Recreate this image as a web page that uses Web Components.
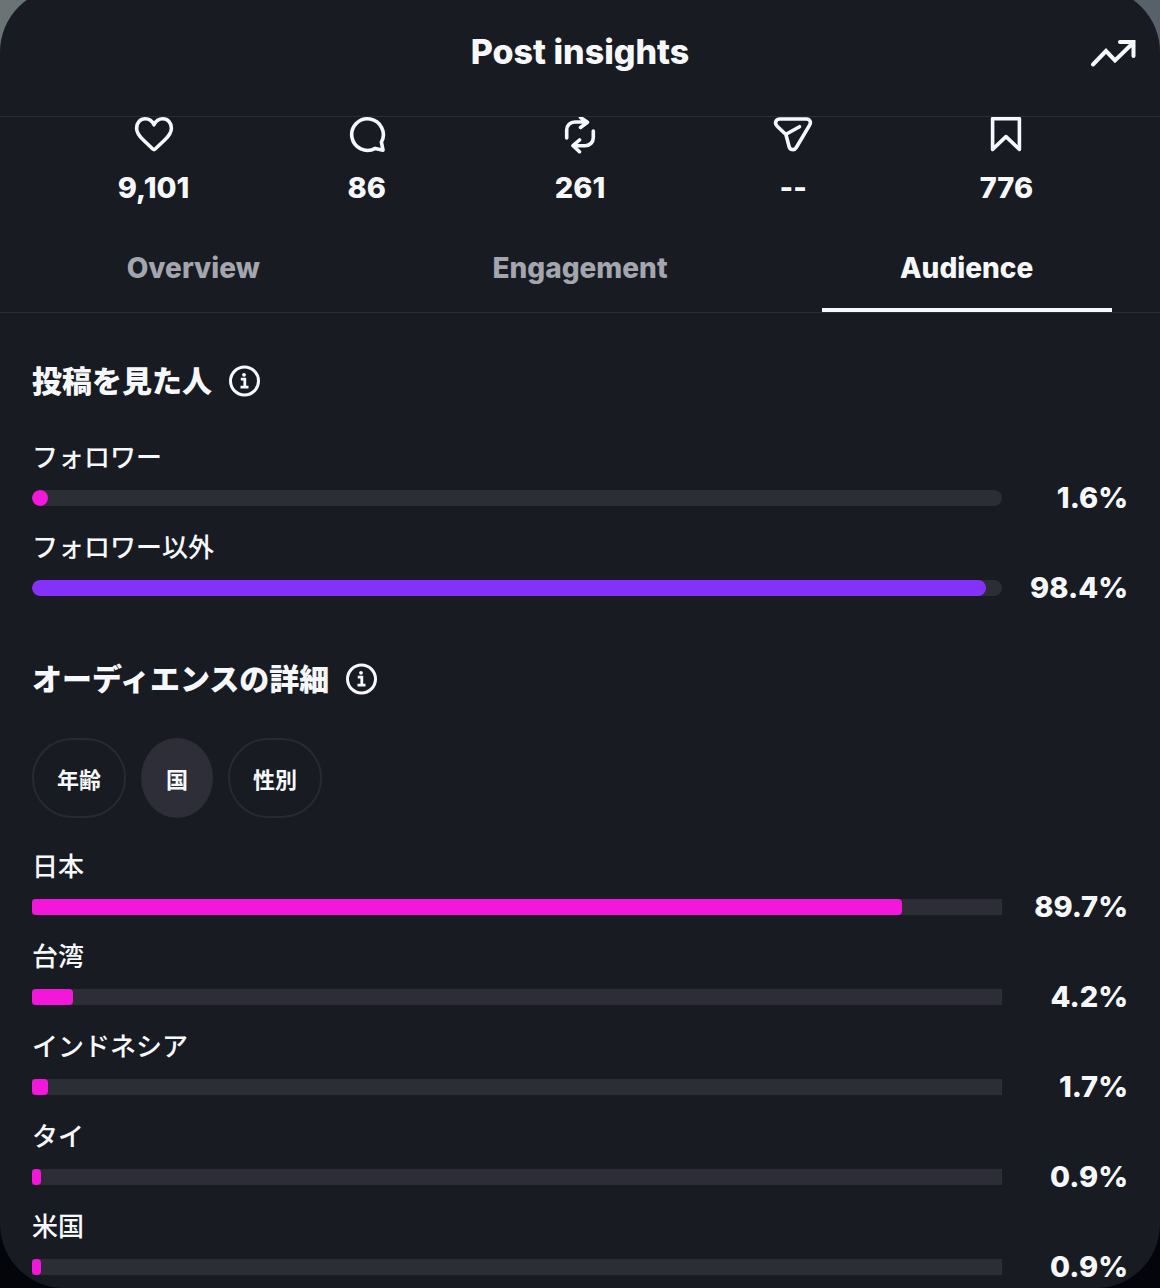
<!DOCTYPE html>
<html lang="ja">
<head>
<meta charset="utf-8">
<meta name="viewport" content="width=device-width, initial-scale=1">
<title>Post insights</title>
<style>
  body {
    margin: 0;
    min-height: 100vh;
    overflow-x: hidden;
    background: linear-gradient(to right, #6b7474, #56616a) top / 100% 50% no-repeat #04050b;
    color: #f8f9ff;
    font-family: Inter, "Noto Sans CJK JP", sans-serif;
  }
</style>
</head>
<body>

<insight-sheet heading="Post insights">
  <stat-row>
    <stat-item icon="heart">9,101</stat-item>
    <stat-item icon="comment">86</stat-item>
    <stat-item icon="repost">261</stat-item>
    <stat-item icon="share">--</stat-item>
    <stat-item icon="bookmark">776</stat-item>
  </stat-row>

  <insight-tabs role="tablist">
    <insight-tab>Overview</insight-tab>
    <insight-tab>Engagement</insight-tab>
    <insight-tab selected>Audience</insight-tab>
  </insight-tabs>

  <insight-section heading="投稿を見た人">
    <ratio-list>
      <ratio-bar label="フォロワー" value="1.6" rounded></ratio-bar>
      <ratio-bar label="フォロワー以外" value="98.4" color="#8431fb" rounded></ratio-bar>
    </ratio-list>
  </insight-section>

  <insight-section heading="オーディエンスの詳細">
    <filter-chips>
      <filter-chip>年齢</filter-chip>
      <filter-chip selected>国</filter-chip>
      <filter-chip>性別</filter-chip>
    </filter-chips>
    <ratio-list>
      <ratio-bar label="日本" value="89.7"></ratio-bar>
      <ratio-bar label="台湾" value="4.2"></ratio-bar>
      <ratio-bar label="インドネシア" value="1.7"></ratio-bar>
      <ratio-bar label="タイ" value="0.9"></ratio-bar>
      <ratio-bar label="米国" value="0.9"></ratio-bar>
    </ratio-list>
  </insight-section>
</insight-sheet>

<script>
const ICONS = {
  heart: '<path d="M20 7.8C18.2 4 15 1.8 11.2 1.8 6.2 1.8 2.6 5.8 2.6 11.2c0 5 3 8.300 7 12.100l9.200 8.700q1.200 1.100 2.400 0l9.200-8.700c4-3.800 7-7.100 7-12.100 0-5.400-3.600-9.400-8.600-9.400C25 1.800 21.800 4 20 7.800Z"/>',
  comment: '<path d="M34.400 25.200A15.800 15.800 0 1 0 28.300 31.400L36 33.200Z"/>',
  repost: '<path d="M6.700 21v-8a8 8 0 0 1 8-8H27M20.500 .5 27.500 5.200l-7 5.300M33.300 14v6.700a8 8 0 0 1-8 8H13M19.500 23l-6.500 5.700 6.500 6"/>',
  share: '<path d="M7 2h26.300c3.800 0 5 3.200 3.300 6.200L23.300 30.500c-2 3.300-6.400 2.500-7.200-1l-3.200-12L4.200 9.200C1.200 6.300 2.600 2 7 2ZM13 17.300l13.500-7.600"/>',
  bookmark: '<path d="M6.600 1.700h26.800V32.400L20 19.600 6.600 32.400Z"/>'
};

// sheet with a title bar; the page behind it shows at the corners
class InsightSheet extends HTMLElement {
  constructor() {
    super();
    this.attachShadow({mode: 'open'});
    this.shadowRoot.innerHTML = `
      <style>
        :host {
          display: block;
          box-sizing: border-box;
          margin-top: -12px;
          padding: 12px 0 7px;
          border-radius: 64px;
          background: #191b22;
        }
        header {
          display: grid;
          grid-template-columns: 1fr auto 1fr;
          align-items: center;
          height: 104px;
          padding: 0 24px 12px;
          border-bottom: 1px solid #2b2d34;
        }
        h1 {
          grid-column: 2;
          margin: 0;
          font-size: 34px;
          line-height: 40px;
          font-weight: 800;
        }
        button {
          justify-self: end;
          display: flex;
          padding: 0;
          border: 0;
          background: none;
          color: inherit;
          cursor: pointer;
        }
        svg {
          width: 46px;
          height: 32px;
          fill: none;
          stroke: currentColor;
          stroke-width: 4;
          stroke-linecap: round;
        }
      </style>
      <header>
        <h1></h1>
        <button aria-label="Trends">
          <svg viewBox="0 0 46 32"><path d="M3 28.500 16 15l9 9.500L43 7M30 6h13.500v14"/></svg>
        </button>
      </header>
      <main><slot></slot></main>
    `;
    this.heading = this.shadowRoot.querySelector('h1');
  }

  connectedCallback() {
    this.heading.textContent = this.getAttribute('heading');
  }
}

class StatRow extends HTMLElement {
  constructor() {
    super();
    this.attachShadow({mode: 'open'});
    this.shadowRoot.innerHTML = `
      <style>
        :host {
          display: flex;
          padding: 0 47px 20px;
        }
        ::slotted(*) {
          flex: 1;
        }
      </style>
      <slot></slot>
    `;
  }
}

class StatItem extends HTMLElement {
  constructor() {
    super();
    this.attachShadow({mode: 'open'});
    this.shadowRoot.innerHTML = `
      <style>
        :host {
          display: flex;
          flex-direction: column;
          align-items: center;
          gap: 16px;
          font-size: 29px;
          line-height: 32px;
          font-weight: 800;
        }
        svg {
          width: 40px;
          height: 39px;
          fill: none;
          stroke: currentColor;
          stroke-width: 3.6;
          stroke-linecap: round;
          stroke-linejoin: round;
        }
      </style>
      <svg viewBox="0 0 40 39" aria-hidden="true"></svg>
      <span><slot></slot></span>
    `;
    this.icon = this.shadowRoot.querySelector('svg');
  }

  connectedCallback() {
    this.icon.innerHTML = ICONS[this.getAttribute('icon')];
  }
}

class InsightTabs extends HTMLElement {
  constructor() {
    super();
    this.attachShadow({mode: 'open'});
    this.shadowRoot.innerHTML = `
      <style>
        :host {
          display: flex;
          border-bottom: 1px solid #2b2d34;
        }
        ::slotted(*) {
          flex: 1;
        }
      </style>
      <slot></slot>
    `;
    this.addEventListener('click', (event) => this.select(event.target.closest('insight-tab')));
  }

  select(tab) {
    if (!tab) return;
    for (const item of this.children) {
      item.toggleAttribute('selected', item === tab);
    }
  }
}

class InsightTab extends HTMLElement {
  static observedAttributes = ['selected'];

  constructor() {
    super();
    this.attachShadow({mode: 'open'});
    this.shadowRoot.innerHTML = `
      <style>
        :host {
          display: block;
        }
        button {
          width: 100%;
          height: 88px;
          padding: 0;
          border: 0;
          background: none;
          color: #a3a5af;
          font: inherit;
          font-size: 28px;
          font-weight: 800;
          cursor: pointer;
        }
        :host([selected]) button {
          color: #f8f9ff;
          background: linear-gradient(#f8f9ff, #f8f9ff) center bottom / 75% 4px no-repeat;
        }
      </style>
      <button role="tab" aria-selected="false"><slot></slot></button>
    `;
    this.button = this.shadowRoot.querySelector('button');
  }

  attributeChangedCallback() {
    this.button.setAttribute('aria-selected', this.hasAttribute('selected'));
  }
}

class InsightSection extends HTMLElement {
  constructor() {
    super();
    this.attachShadow({mode: 'open'});
    this.shadowRoot.innerHTML = `
      <style>
        :host {
          display: block;
          padding: 48px 32px 0;
        }
        :host(:last-child) {
          padding-top: 57px;
        }
        .title {
          display: flex;
          align-items: center;
          gap: 16px;
          margin-bottom: 39px;
        }
        h2 {
          margin: 0;
          font-size: 30px;
          line-height: 40px;
          font-weight: 900;
        }
        button {
          display: flex;
          padding: 0;
          border: 0;
          background: none;
          color: inherit;
          cursor: pointer;
        }
        svg {
          width: 34px;
          height: 34px;
          fill: none;
          stroke: currentColor;
          stroke-width: 3;
        }
      </style>
      <div class="title">
        <h2></h2>
        <button aria-label="Info">
          <svg viewBox="0 0 34 34">
            <circle cx="16.500" cy="17" r="14"/>
            <circle cx="16" cy="10.800" r="1.900" fill="currentColor" stroke="none"/>
            <path d="M12.800 15.200h4v8M12.500 23.200h8" stroke-width="2.800"/>
          </svg>
        </button>
      </div>
      <slot></slot>
    `;
    this.heading = this.shadowRoot.querySelector('h2');
  }

  connectedCallback() {
    this.heading.textContent = this.getAttribute('heading');
  }
}

class FilterChips extends HTMLElement {
  constructor() {
    super();
    this.attachShadow({mode: 'open'});
    this.shadowRoot.innerHTML = `
      <style>
        :host {
          display: flex;
          gap: 15px;
          margin-bottom: 31px;
        }
      </style>
      <slot></slot>
    `;
    this.addEventListener('click', (event) => this.select(event.target.closest('filter-chip')));
  }

  select(chip) {
    if (!chip) return;
    for (const item of this.children) {
      item.toggleAttribute('selected', item === chip);
    }
  }
}

class FilterChip extends HTMLElement {
  constructor() {
    super();
    this.attachShadow({mode: 'open'});
    this.shadowRoot.innerHTML = `
      <style>
        :host {
          display: block;
        }
        button {
          height: 80px;
          padding: 0 23px;
          border: 2px solid #282a31;
          border-radius: min(40px, 50%) / 40px;
          background: none;
          color: inherit;
          font: inherit;
          font-size: 22px;
          font-weight: 700;
          cursor: pointer;
        }
        :host([selected]) button {
          border-color: #2d2e38;
          background: #2d2e38;
        }
      </style>
      <button><slot></slot></button>
    `;
  }
}

class RatioList extends HTMLElement {
  constructor() {
    super();
    this.attachShadow({mode: 'open'});
    this.shadowRoot.innerHTML = `
      <style>
        :host {
          display: flex;
          flex-direction: column;
          gap: 18px;
        }
      </style>
      <slot></slot>
    `;
  }
}

// label above a track, percentage to the right of it
class RatioBar extends HTMLElement {
  constructor() {
    super();
    this.attachShadow({mode: 'open'});
    this.shadowRoot.innerHTML = `
      <style>
        :host {
          display: block;
        }
        .label {
          margin-bottom: 8px;
          font-size: 26px;
          line-height: 36px;
          font-weight: 500;
        }
        .row {
          display: grid;
          grid-template-columns: 1fr 126px;
          align-items: center;
        }
        .track {
          height: 16px;
          background: #2c2d36;
          overflow: hidden;
        }
        .fill {
          height: 100%;
          border-radius: 4px;
          background: #f317d9;
        }
        :host([rounded]) .track, :host([rounded]) .fill {
          border-radius: 8px;
        }
        .value {
          font-size: 29px;
          line-height: 28px;
          font-weight: 800;
          text-align: right;
        }
      </style>
      <div class="label" id="label"></div>
      <div class="row">
        <div class="track" role="meter" aria-labelledby="label" aria-valuemin="0" aria-valuemax="100">
          <div class="fill"></div>
        </div>
        <div class="value"></div>
      </div>
    `;
    this.label = this.shadowRoot.querySelector('.label');
    this.track = this.shadowRoot.querySelector('.track');
    this.fill = this.shadowRoot.querySelector('.fill');
    this.percent = this.shadowRoot.querySelector('.value');
  }

  connectedCallback() {
    const value = this.getAttribute('value');
    this.label.textContent = this.getAttribute('label');
    this.track.setAttribute('aria-valuenow', value);
    this.fill.style.width = `${value}%`;
    this.percent.textContent = `${value}%`;
    if (this.hasAttribute('color')) {
      this.fill.style.background = this.getAttribute('color');
    }
  }
}

customElements.define('insight-sheet', InsightSheet);
customElements.define('stat-row', StatRow);
customElements.define('stat-item', StatItem);
customElements.define('insight-tabs', InsightTabs);
customElements.define('insight-tab', InsightTab);
customElements.define('insight-section', InsightSection);
customElements.define('filter-chips', FilterChips);
customElements.define('filter-chip', FilterChip);
customElements.define('ratio-list', RatioList);
customElements.define('ratio-bar', RatioBar);
</script>
</body>
</html>
